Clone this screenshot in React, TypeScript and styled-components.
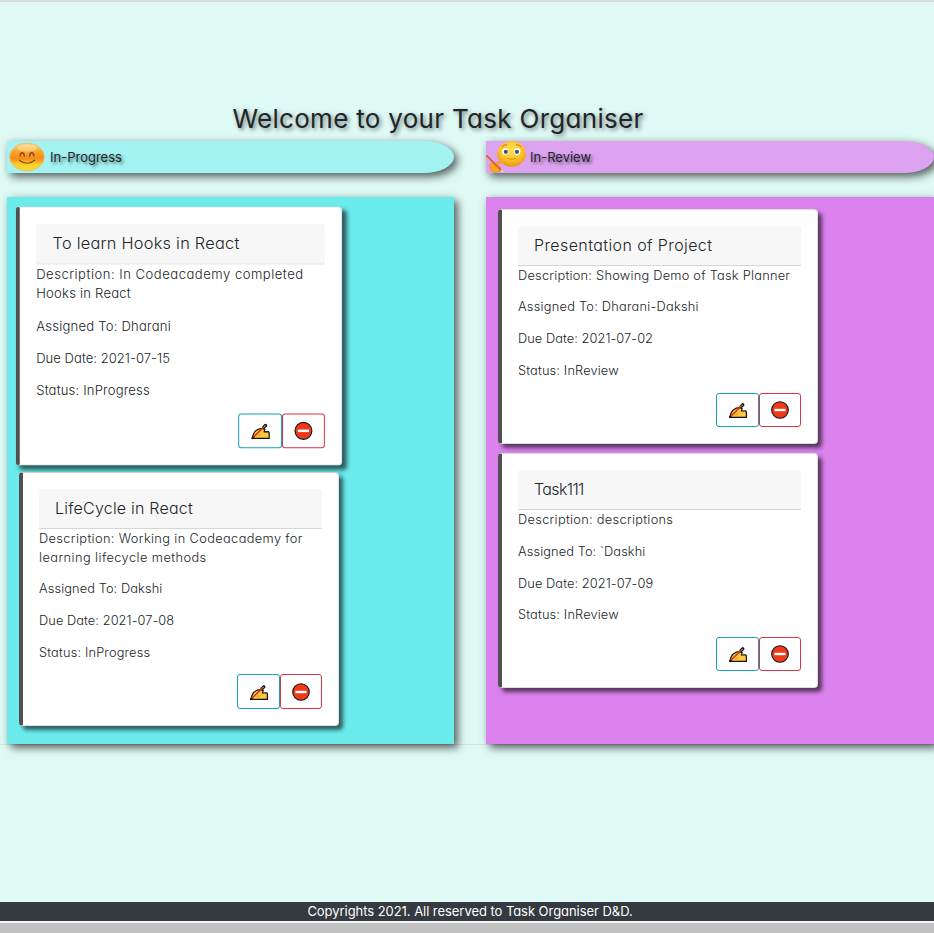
import React from 'react';
import styled, { createGlobalStyle } from 'styled-components';

const GlobalStyle = createGlobalStyle`
  *, *::before, *::after { box-sizing: border-box; }
  html, body, #root { height: 100%; }
  body {
    margin: 0;
    overflow: hidden;
    background: #dffaf5;
    color: #212529;
    font-family: Inter, "Open Sans", sans-serif;
    font-feature-settings: "cv11";
  }
`;

const Page = styled.div`
  display: flex;
  flex-direction: column;
  height: 933px;
  border-top: 2px solid #d9dde0;
  overflow: hidden;
`;

const Title = styled.h1`
  margin: 98px 0 0;
  padding-right: 58px;
  height: 41px;
  line-height: 38px;
  text-align: center;
  font-size: 26px;
  font-weight: 400;
  letter-spacing: 0.3px;
  text-shadow: 2px 2px 4px rgba(0, 0, 0, 0.5);
`;

const Board = styled.main`
  display: flex;
  gap: 32px;
  height: 604px;
  padding-left: 7px;
  border-bottom: 1px solid #d6dfdd;
`;

const Column = styled.section`
  display: flex;
  flex-direction: column;
  gap: 24px;
  flex: 0 0 auto;
  width: 447px;
  &:last-child { width: 448px; }
`;

const columnShadow = '4px 4px 8px rgba(0, 0, 0, 0.58), 0 0 8px rgba(0, 0, 0, 0.1)';

const ColumnHeader = styled.header<{ $color: string; $inset: number }>`
  display: flex;
  align-items: center;
  flex: 0 0 32px;
  gap: ${p => 4 + p.$inset / 2}px;
  padding-left: ${p => p.$inset}px;
  background: ${p => p.$color};
  border-radius: 0 30px 30px 0 / 0 16px 16px 0;
  box-shadow: ${columnShadow};
  font-size: 13px;
  text-shadow: 2px 2px 3px rgba(0, 0, 0, 0.5);
`;

const ColumnBody = styled.div<{ $color: string; $top: number; $gap: number }>`
  display: flex;
  flex-direction: column;
  gap: ${p => p.$gap}px;
  flex: 0 0 547px;
  padding: ${p => p.$top}px 0 0 12px;
  background: ${p => p.$color};
  box-shadow: ${columnShadow};
`;

const CardBox = styled.article<{ $raised?: boolean }>`
  width: 320px;
  padding: 16px;
  background: #fff;
  border: 1px solid rgba(0, 0, 0, 0.125);
  border-left: 4px solid #505050;
  border-radius: 4px;
  box-shadow: 4px 4px 4px rgba(0, 0, 0, 0.6);
  transform: ${p => (p.$raised ? 'scale(1.02)' : 'none')};
`;

const CardTitle = styled.h2<{ $tracking: number }>`
  margin: 0;
  height: 40px;
  padding: 0 16px;
  line-height: 38px;
  background: #f7f7f7;
  border-bottom: 1px solid #d6d6d6;
  border-radius: 3px 3px 0 0;
  font-size: 16px;
  font-weight: 300;
  letter-spacing: ${p => p.$tracking}px;
  white-space: nowrap;
`;

const Field = styled.p`
  margin: 0 0 12.7px;
  font-size: 12.8px;
  line-height: 19px;
  font-weight: 300;
  white-space: nowrap;
`;

const Line = styled.span<{ $tracking: number }>`
  display: block;
  letter-spacing: ${p => p.$tracking}px;
`;

const Actions = styled.div`
  display: flex;
  justify-content: flex-end;
`;

const ActionButton = styled.button<{ $tone: 'info' | 'danger' }>`
  display: flex;
  align-items: center;
  justify-content: center;
  width: ${p => (p.$tone === 'info' ? 43 : 42)}px;
  height: 34.4px;
  padding: 0;
  background: #fff;
  border: 1px solid ${p => (p.$tone === 'info' ? '#17a2b8' : '#dc3545')};
  border-radius: 3px;
`;

const Spacer = styled.div`
  flex: 1;
`;

const Footer = styled.footer`
  height: 19px;
  line-height: 19px;
  padding-left: 6px;
  background: #343a40;
  color: #fff;
  font-size: 13px;
  letter-spacing: -0.05px;
  text-align: center;
`;

const ScrollTrack = styled.div`
  height: 12px;
  border-top: 2px solid #f4f6f6;
  background: #c1c1c1;
`;

const WritingHand = () => (
  <svg width="20" height="20" viewBox="0 0 20 20">
    <path d="M1.6 17.4 3 13.4 4.6 10.4 8 8.2 12 7.6 14.2 8.6 13.4 11 17.8 10.8 18.4 12V17.4Z" fill="#ffc83d" stroke="#111" strokeWidth="1.2" strokeLinejoin="round" />
    <path d="M6.5 15.6 9.8 12.4 10.4 15.2Z" fill="#f4a51c" />
    <path d="M13 6.6 14.8 4.8" stroke="#111" strokeWidth="3.3" strokeLinecap="round" />
    <path d="M13.2 6.4 14.8 4.8" stroke="#999" strokeWidth="1.2" />
    <path d="M2.4 16.8 13.2 6.2" stroke="#d9341a" strokeWidth="1.6" />
    <path d="M1.4 17.8 3.2 16" stroke="#111" strokeWidth="1.5" />
  </svg>
);

const NoEntry = () => (
  <svg width="20" height="20" viewBox="0 0 20 20">
    <circle cx="10" cy="10" r="8.3" fill="#f03a17" stroke="#111" strokeWidth="1.1" />
    <rect x="4.5" y="8.8" width="11" height="2.4" fill="#fff" />
  </svg>
);

const SmilingFace = () => (
  <svg width="36" height="30" viewBox="0 0 36 30">
    <defs>
      <linearGradient id="smile" x1="0" y1="0" x2="0" y2="1">
        <stop offset="0" stopColor="#fbd878" />
        <stop offset="0.3" stopColor="#f9a72a" />
        <stop offset="0.55" stopColor="#f48a1c" />
        <stop offset="0.78" stopColor="#fbd126" />
        <stop offset="1" stopColor="#f8d92c" />
      </linearGradient>
    </defs>
    <ellipse cx="18" cy="15" rx="17.3" ry="13.7" fill="url(#smile)" stroke="#f5b56b" strokeWidth="0.9" />
    <ellipse cx="18" cy="6" rx="10" ry="3.4" fill="#fff" opacity="0.3" />
    <path d="M11 14.5q.4-3.8 2.2-3.8t2.3 3.8M20.5 14.5q.5-3.8 2.3-3.8t2.2 3.8" fill="none" stroke="#884813" strokeWidth="1.4" />
    <path d="M10 18q8 6.6 16 0" fill="none" stroke="#884813" strokeWidth="1.1" />
  </svg>
);

const WritingFace = () => (
  <svg width="40" height="32" viewBox="0 0 40 32">
    <defs>
      <radialGradient id="face" cx="0.5" cy="0.35" r="0.65">
        <stop offset="0" stopColor="#ffe04f" />
        <stop offset="0.6" stopColor="#fdc32b" />
        <stop offset="1" stopColor="#ee9413" />
      </radialGradient>
    </defs>
    <ellipse cx="25.5" cy="13" rx="14.4" ry="12.8" fill="url(#face)" />
    <path d="M16 6q2-2.6 5-2.2M30 3.8q3-.4 5 2.2" fill="none" stroke="#b56d14" strokeWidth="0.9" />
    <ellipse cx="19.3" cy="10.5" rx="3.2" ry="3.3" fill="#fff" />
    <ellipse cx="31.2" cy="10.5" rx="3.2" ry="3.3" fill="#fff" />
    <circle cx="19.8" cy="10.8" r="2.1" fill="#35567d" />
    <circle cx="30.9" cy="10.8" r="2.1" fill="#35567d" />
    <path d="M21 17.4q4.5 1.8 9-.2" fill="none" stroke="#d98c1c" strokeWidth="1" />
    <path d="M3.5 24.5 6 21.8l3 .3 3-1.5 1.6 1-1.4 2.8 2.7 1.6-1.5 4.4L9 31.6 4.6 29.5Z" fill="#f9a91f" stroke="#e3871b" strokeWidth="0.6" />
    <path d="M0.5 14.5 15.4 29.6" stroke="#d9603f" strokeWidth="1.9" />
    <path d="m15 29.2 2.4 2.2" stroke="#edcf98" strokeWidth="1.6" />
  </svg>
);

type TextLine = [text: string, tracking: number];

interface Task {
  title: TextLine;
  description: TextLine[];
  assigned: TextLine;
  due: TextLine;
  status: TextLine;
  raised?: boolean;
}

const inProgress: Task[] = [
  {
    title: ['To learn Hooks in React', 0.25],
    description: [['Description: In Codeacademy completed', 0.5], ['Hooks in React', 0.22]],
    assigned: ['Assigned To: Dharani', 0.22],
    due: ['Due Date: 2021-07-15', 0.02],
    status: ['Status: InProgress', 0.18],
    raised: true,
  },
  {
    title: ['LifeCycle in React', 0.22],
    description: [['Description: Working in Codeacademy for', 0.37], ['learning lifecycle methods', 0.43]],
    assigned: ['Assigned To: Dakshi', 0.1],
    due: ['Due Date: 2021-07-08', 0.07],
    status: ['Status: InProgress', 0.16],
  },
];

const inReview: Task[] = [
  {
    title: ['Presentation of Project', 0.4],
    description: [['Description: Showing Demo of Task Planner', 0.24]],
    assigned: ['Assigned To: Dharani-Dakshi', 0.24],
    due: ['Due Date: 2021-07-02', 0.06],
    status: ['Status: InReview', 0.15],
  },
  {
    title: ['Task111', -0.63],
    description: [['Description: descriptions', 0.3]],
    assigned: ['Assigned To: `Daskhi', 0.1],
    due: ['Due Date: 2021-07-09', 0.08],
    status: ['Status: InReview', 0.15],
  },
];

const TaskField = ({ lines }: { lines: TextLine[] }) => (
  <Field>
    {lines.map(([text, tracking]) => (
      <Line key={text} $tracking={tracking}>{text}</Line>
    ))}
  </Field>
);

const TaskCard = ({ task }: { task: Task }) => (
  <CardBox $raised={task.raised}>
    <CardTitle $tracking={task.title[1]}>{task.title[0]}</CardTitle>
    <TaskField lines={task.description} />
    <TaskField lines={[task.assigned]} />
    <TaskField lines={[task.due]} />
    <TaskField lines={[task.status]} />
    <Actions>
      <ActionButton $tone="info" aria-label="Edit"><WritingHand /></ActionButton>
      <ActionButton $tone="danger" aria-label="Delete"><NoEntry /></ActionButton>
    </Actions>
  </CardBox>
);

export default function App() {
  return (
    <>
      <GlobalStyle />
      <Page>
        <Title>Welcome to your Task Organiser</Title>
        <Board>
          <Column>
            <ColumnHeader $color="#a3f3f2" $inset={2}>
              <SmilingFace />
              <span>In-Progress</span>
            </ColumnHeader>
            <ColumnBody $color="#6cebec" $top={12} $gap={8.6}>
              {inProgress.map(task => <TaskCard key={task.title[0]} task={task} />)}
            </ColumnBody>
          </Column>
          <Column>
            <ColumnHeader $color="#dda3f0" $inset={0}>
              <WritingFace />
              <span>In-Review</span>
            </ColumnHeader>
            <ColumnBody $color="#db82ee" $top={11.8} $gap={9.4}>
              {inReview.map(task => <TaskCard key={task.title[0]} task={task} />)}
            </ColumnBody>
          </Column>
        </Board>
        <Spacer />
        <Footer>Copyrights 2021. All reserved to Task Organiser D&amp;D.</Footer>
        <ScrollTrack />
      </Page>
    </>
  );
}
